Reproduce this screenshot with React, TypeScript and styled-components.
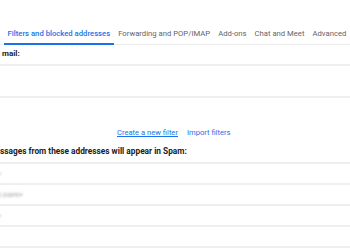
import React from 'react';
import styled, { createGlobalStyle } from 'styled-components';

const GlobalStyle = createGlobalStyle`
  html, body {
    margin: 0;
    padding: 0;
    background: #ffffff;
    overflow: hidden;
  }
  body {
    font-family: Roboto, "Liberation Sans", Arial, sans-serif;
    color: #202124;
  }
`;

const tabs = ['Labels', 'Filters and blocked addresses', 'Forwarding and POP/IMAP', 'Add-ons', 'Chat and Meet', 'Advanced'];
const blocked = ['m>', 'ner.com>', 'm>'];

const App = () => {
  return (
    <Page>
      <GlobalStyle />
      <TabBar>
        {tabs.map((t, i) => (
          <Tab key={t} $active={i === 1}>
            {t}
          </Tab>
        ))}
      </TabBar>
      <SectionTitle>mail:</SectionTitle>
      <ThickRule />
      <EmptyFilters />
      <ThickRule />
      <Links>
        <LinkText $underline>Create a new filter</LinkText>
        <LinkText>Import filters</LinkText>
      </Links>
      <SectionTitle $tight>ssages from these addresses will appear in Spam:</SectionTitle>
      <List>
        {blocked.map((b, i) => (
          <Row key={i}>
            <Blurred>{b}</Blurred>
          </Row>
        ))}
        <Row />
      </List>
    </Page>
  );
};

const Page = styled.div`
  width: 350px;
  height: 250px;
  overflow: hidden;
  padding-top: 27px;
  box-sizing: border-box;
`;

const TabBar = styled.div`
  display: flex;
  margin-left: -27px;
  border-bottom: 1px solid #ececec;
  white-space: nowrap;
`;

const Tab = styled.div<{ $active?: boolean }>`
  padding: 0 4px 3px;
  font-size: 7.7px;
  line-height: 13px;
  color: ${(p) => (p.$active ? '#1a73e8' : '#5f6368')};
  font-weight: ${(p) => (p.$active ? 500 : 400)};
  border-bottom: 2px solid ${(p) => (p.$active ? '#1a73e8' : 'transparent')};
  margin-bottom: -1px;
`;

const SectionTitle = styled.div<{ $tight?: boolean }>`
  font-size: ${(p) => (p.$tight ? '8.3px' : '8px')};
  font-weight: 700;
  line-height: 12px;
  padding: ${(p) => (p.$tight ? '6px 0 5px 0' : '3px 0 4px 2px')};
  color: #202124;
  white-space: nowrap;
`;

const ThickRule = styled.div`
  height: 2px;
  background: #efefef;
`;

const EmptyFilters = styled.div`
  height: 30px;
`;

const Links = styled.div`
  display: flex;
  gap: 9px;
  padding: 27px 0 0 117px;
  height: 14px;
  align-items: center;
`;

const LinkText = styled.span<{ $underline?: boolean }>`
  font-size: 7.6px;
  color: #1a73e8;
  text-decoration: ${(p) => (p.$underline ? 'underline' : 'none')};
`;

const List = styled.div`
  border-top: 2px solid #efefef;
`;

const Row = styled.div`
  height: 19px;
  border-bottom: 2px solid #efefef;
  display: flex;
  align-items: center;
`;

const Blurred = styled.span`
  font-size: 8px;
  color: #9a9a9a;
  filter: blur(0.8px);
  margin-left: -10px;
`;

export default App;
